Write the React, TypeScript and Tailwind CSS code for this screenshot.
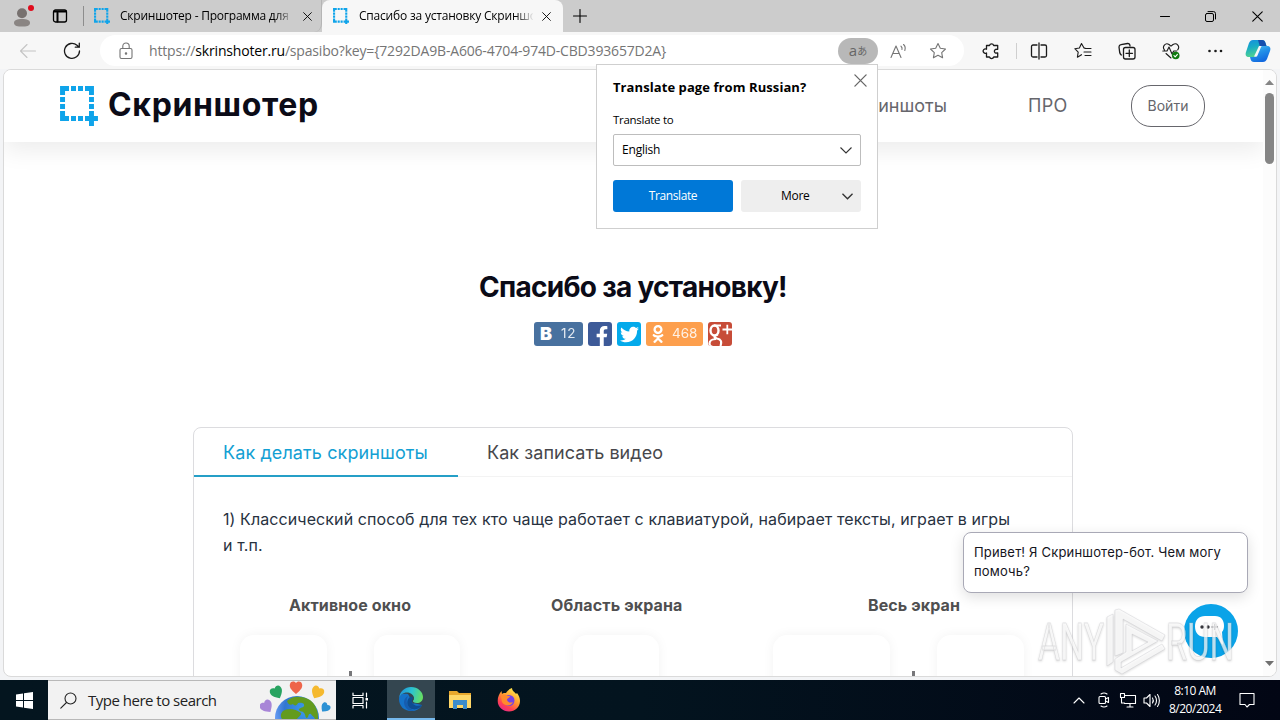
import type { ReactNode } from "react";
import { FaFacebookF, FaOdnoklassniki, FaTwitter } from "react-icons/fa";

interface IconProps {
  children: ReactNode;
  className?: string;
  size?: number;
  box?: number;
  stroke?: number;
}

function Icon({ children, className = "", size = 18, box = 18, stroke = 1.1 }: IconProps) {
  return (
    <svg
      width={size}
      height={size}
      viewBox={`0 0 ${box} ${box}`}
      fill="none"
      stroke="currentColor"
      strokeWidth={stroke}
      strokeLinecap="round"
      strokeLinejoin="round"
      className={`shrink-0 ${className}`}
    >
      {children}
    </svg>
  );
}

function CropLogo({ size }: { size: number }) {
  return (
    <svg width={size} height={size * 1.05} viewBox="0 0 38 40" fill="#0fa4ea" className="shrink-0">
      <path d="M0 0h9v5H5v4H0zM11 0h5v5h-5zM18 0h5v5h-5zM25 0h9v9h-5V5h-4zM0 11h5v5H0zM0 18h5v5H0zM0 25h5v5h4v5H0zM29 11h5v5h-5zM29 18h5v5h-5zM11 30h5v5h-5zM18 30h5v5h-5zM25 30h4v-5h5v5h4v5h-4v5h-5v-5h-4z" />
    </svg>
  );
}

function Close({ size = 9 }: { size?: number }) {
  return (
    <Icon size={size} box={10} stroke={1}>
      <path d="M.7.7l8.6 8.6M9.3.7L.7 9.3" />
    </Icon>
  );
}

function TabStrip() {
  return (
    <div className="flex h-8 shrink-0 items-center bg-[#cccccc] text-xs text-black">
      <svg width="24" height="24" viewBox="0 0 24 24" className="ml-[10px] shrink-0">
        <circle cx="12" cy="9.3" r="5" fill="#77716f" />
        <path d="M4 19c0-3 3-4 8-4s8 1 8 4-4 3.500-8 3.500S4 22 4 19z" fill="#8a8583" />
        <circle cx="21" cy="4" r="3" fill="#e00b1c" />
      </svg>
      <Icon size={16} box={16} className="ml-[18px]" stroke={1.3}>
        <rect x="1.500" y="2" width="13" height="12" rx="2" />
        <path d="M2 3.500h12M5.500 5v8.500" strokeWidth="2" />
      </Icon>
      <div className="ml-[15px] h-5 w-px bg-[#8d8d8d]" />
      <div className="flex h-8 w-[238px] items-center rounded-br-lg border-r border-[#b5b5b5]">
        <div className="ml-[10px] flex w-[26px]">
          <CropLogo size={16} />
        </div>
        <span className="w-[170px] whitespace-nowrap bg-linear-to-r from-black from-90% to-[#aaaaaa] bg-clip-text tracking-[-0.22px] text-transparent">
          Скриншотер - Программа для
        </span>
        <div className="ml-[13px]">
          <Close />
        </div>
      </div>
      <div className="flex h-8 w-[241px] items-center rounded-t-lg bg-[#f7f7f7]">
        <div className="ml-[11px] flex w-[26px]">
          <CropLogo size={16} />
        </div>
        <span className="w-[174px] whitespace-nowrap bg-linear-to-r from-black from-88% to-[#e8e8e8] bg-clip-text tracking-[-0.2px] text-transparent">
          Спасибо за установку Скриншо
        </span>
        <div className="ml-[9px]">
          <Close />
        </div>
      </div>
      <Icon size={14} box={14} className="ml-[10px]">
        <path d="M7 .5v13M.5 7h13" />
      </Icon>
      <div className="ml-auto flex items-center">
        <Icon size={10} box={10} className="mr-[35px]">
          <path d="M.5 5.500h9" />
        </Icon>
        <Icon size={11} box={11} className="mr-9" stroke={1}>
          <rect x=".5" y="2.500" width="8" height="8" rx="1.500" />
          <path d="M3 .6h5.500a2 2 0 012 2V8" />
        </Icon>
        <span className="mr-[17px]">
          <Close size={11} />
        </span>
      </div>
    </div>
  );
}

function Toolbar() {
  return (
    <div className="flex h-[37px] shrink-0 items-center bg-[#f7f7f7] text-[#1b1b1b]">
      <Icon className="ml-[19px] text-[#c4c4c4]">
        <path d="M16.500 9H1.500M8 2.500L1.500 9 8 15.500" />
      </Icon>
      <Icon className="ml-[26px]" stroke={1.3}>
        <path d="M16.500 9A7.500 7.500 0 1114 3.300L16.200 5.200M16.300 1.200v4h-4" />
      </Icon>
      <div className="ml-[19px] flex h-[31px] w-[864px] items-center rounded-full bg-white text-[#757575]">
        <Icon className="ml-[17px]">
          <rect x="3" y="6.500" width="12" height="10" rx="1.500" />
          <path d="M5.800 6.500V4.200a3.200 3.200 0 016.400 0v2.300" />
          <circle cx="9" cy="11.500" r=".7" fill="currentColor" />
        </Icon>
        <span className="ml-[14px] w-[689px] whitespace-nowrap text-sm tracking-[-0.18px]">
          https://<span className="text-black">skrinshoter.ru</span>/spasibo?key=&#123;7292DA9B-A606-4704-974D-CBD393657D2A&#125;
        </span>
        <div className="flex h-[26px] w-10 items-center justify-center rounded-full bg-[#b8b8b8] font-['Open_Sans','Noto_Sans_CJK_JP',sans-serif] text-[#666]">
          <span className="text-[15px] leading-none">a</span>
          <span className="text-[10px] leading-none">あ</span>
        </div>
        <Icon className="ml-[12px]">
          <path d="M1 15.500L6 4l5 11.500M2.700 11.500h6.600M11 4.200c1 .8 1.300 2 1 3.300M13.500 2.500c1.700 1.500 2 3.800 1.300 6" />
        </Icon>
        <Icon className="ml-[21px]">
          <path d="M9 1.500l2.300 4.800 5.200.7-3.800 3.600.9 5.200L9 13.300l-4.600 2.500.9-5.200L1.500 7l5.200-.7z" />
        </Icon>
      </div>
      <Icon className="ml-[18px]" stroke={1.3}>
        <path d="M4.500 3.500h3a2.200 2.200 0 014.200 0h4v3.800h-1a1.900 1.900 0 100 3.700h1v4h-4a2.200 2.200 0 01-4.200 0h-3v-4a2.200 2.200 0 110-3.800z" />
      </Icon>
      <div className="ml-[16px] h-4 w-px bg-[#cfcfcf]" />
      <Icon className="ml-[13px]" stroke={1.3}>
        <path d="M7 3H3a1.500 1.500 0 00-1.500 1.500v9A1.500 1.500 0 003 15h4M11 3h4a1.500 1.500 0 011.500 1.500v9A1.500 1.500 0 0115 15h-4M9 1v16" />
      </Icon>
      <Icon className="ml-[26px]">
        <path d="M10 6L7.500 1.500 5.400 6l-4.600.7 3.400 3.400-.8 5.100 4.100-2.500M11 6.500h6M10 10h7M11 13.500h6M10 6h1" />
      </Icon>
      <Icon className="ml-[26px]" stroke={1.3}>
        <path d="M3.500 13C1.800 12.500 1.700 11 1.500 9L1 5c0-1.500.8-2.200 2-2.400L9.500 1.500c1.500-.1 2.400.7 2.500 2.500" />
        <rect x="5.500" y="5.500" width="11.500" height="11.500" rx="2" />
        <path d="M11.300 8v6.500M8 11.300h6.500" />
      </Icon>
      <Icon className="ml-[26px]">
        <path d="M2.500 8C-.3 4.500 3.500.2 7 2.500l2 1.700 2-1.700c4-2.300 7.300 2 4.700 5.300M.8 9H5l2-4 3 7 1.700-3h3M4 11.500L9 16" />
        <circle cx="13.700" cy="13.500" r="3.800" fill="#0f7b0f" stroke="none" />
        <path d="M12 13.500l1.200 1.300 2.200-2.500" stroke="#fff" />
      </Icon>
      <Icon className="ml-[26px]">
        <g fill="currentColor" stroke="none">
          <circle cx="3.500" cy="9" r="1.300" />
          <circle cx="9.500" cy="9" r="1.300" />
          <circle cx="15" cy="9" r="1.300" />
        </g>
      </Icon>
      <Copilot />
    </div>
  );
}

function Copilot() {
  return (
    <svg width="26" height="24" viewBox="0 0 26 24" className="ml-[21px] shrink-0">
      <defs>
        <linearGradient id="cpA" x1="0" y1="0" x2=".3" y2="1">
          <stop offset="0" stopColor="#168de0" />
          <stop offset=".45" stopColor="#18abc5" />
          <stop offset="1" stopColor="#51d391" />
        </linearGradient>
        <linearGradient id="cpB" x1="0" y1="0" x2=".5" y2="1">
          <stop offset="0" stopColor="#54c8f2" />
          <stop offset=".5" stopColor="#2492e8" />
          <stop offset="1" stopColor="#1269df" />
        </linearGradient>
      </defs>
      <path d="M8 1h9c2 0 3 1 3.500 3l1 3h-5c-2 0-2.500 1-3 3l-2 6c-1 2-2 2-3.500 2H4c-3 0-4-2-3-5L4 4c1-2 2-3 4-3z" fill="url(#cpA)" />
      <path d="M13 1h4c2 0 3 1 3.500 3l1 3h-5l-1.500 1z" fill="#174fae" />
      <path d="M18 7h4c3 0 4 2 3 5l-3 8c-1 2-2 3-4 3H9c-2 0-3-1-3.500-3L5 18h4c2 0 3-1 3.500-3l2-6c.7-1.500 1.500-2 3.500-2z" fill="url(#cpB)" />
      <path d="M14 7h2.500L12 17.500h-3z" fill="#f7f7f7" />
    </svg>
  );
}

function SiteHeader() {
  return (
    <header className="flex h-[72px] shrink-0 items-center bg-white font-['Inter',sans-serif] text-lg text-[#66666c] shadow-[0_8px_24px_rgba(0,0,0,0.08)]">
      <div className="ml-[56px]">
        <CropLogo size={38} />
      </div>
      <span className="-mt-[2px] ml-[10px] w-[690px] text-[32px] font-bold leading-none tracking-[0.65px] text-[#0b0b17]">
        Скриншотер
      </span>
      <span className="-ml-[2px] flex w-[151px] justify-end">Скриншоты</span>
      <span className="ml-[81px] w-[103px] tracking-[0.3px]">ПРО</span>
      <span className="flex h-[42px] w-[74px] items-center justify-center rounded-[20px] border border-[#66666c] text-sm">
        Войти
      </span>
    </header>
  );
}

function ShareRow() {
  return (
    <div className="ml-[530px] mt-[18px] flex h-6 gap-[5px] text-sm text-white">
      <span className="flex w-[49px] items-center rounded-[3px] bg-[#48719f] pl-[6px]">
        <b className="w-[21px] text-lg leading-none font-black">В</b>
        <span className="text-[13.500px] tracking-[0.7px] opacity-85">12</span>
      </span>
      <span className="flex w-6 items-end justify-end overflow-hidden rounded-[3px] bg-[#3d5a98]">
        <FaFacebookF size={20} />
      </span>
      <span className="flex w-6 items-center justify-center rounded-[3px] bg-[#04aaeb]">
        <FaTwitter size={19} />
      </span>
      <span className="flex w-[57px] items-center rounded-[3px] bg-[#fd9f4d] pl-[3px]">
        <FaOdnoklassniki size={18} />
        <span className="ml-[5px] text-[13.500px] opacity-85">468</span>
      </span>
      <svg width="24" height="24" viewBox="0 0 24 24" fill="none" stroke="#fff" strokeWidth="2.400" className="rounded-[3px] bg-[#c74c38]">
        <ellipse cx="6.500" cy="8.500" rx="4" ry="5" />
        <path d="M6 3.500h7M10 12.500c-4 1-5 3-1 4 4 .8 5 3 3.500 7.500M8 17c-4 0-6.500 2-6.500 4.500s2 3.500 4 3.500" strokeWidth="2.200" />
        <path d="M14.500 7.500h9.500M19.300 2.700v9.500" strokeWidth="1.800" />
      </svg>
    </div>
  );
}

function Key({ className }: { className: string }) {
  return <div className={`h-20 shrink-0 rounded-[14px] bg-white shadow-[0_0_12px_rgba(0,0,0,0.05)] ${className}`} />;
}

function GuideCard() {
  return (
    <div className="ml-[189px] mt-[81px] h-[300px] w-[880px] shrink-0 rounded-t-lg border border-[#dcdcdf]">
      <div className="flex h-[49px] border-b border-[#f3f3f3] text-lg leading-[50px]">
        <span className="h-[49px] w-[264px] whitespace-nowrap border-b-2 border-[#259fc7] pl-[29px] tracking-[0.1px] text-[#13a0d3]">
          Как делать скриншоты
        </span>
        <span className="pl-[29px] tracking-[0.06px] text-[#47474b]">Как записать видео</span>
      </div>
      <p className="ml-[29px] mt-[29px] w-[800px] text-base leading-[26px] tracking-[0.09px] text-[#28323f]">
        1) Классический способ для тех кто чаще работает с клавиатурой, набирает тексты, играет в игры
        <br />и т.п.
      </p>
      <div className="mt-[37px] flex text-base font-bold leading-5 whitespace-nowrap text-[#4f4f50]">
        <span className="ml-[95px] w-[262px] tracking-[0.1px]">Активное окно</span>
        <span className="w-[317px] tracking-[0.15px]">Область экрана</span>
        <span className="tracking-[0.1px]">Весь экран</span>
      </div>
      <div className="mt-[20px] flex">
        <Key className="ml-[46px] w-[87px]" />
        <i className="ml-[22px] mt-[36px] h-5 w-[3px] bg-[#77777a]" />
        <Key className="ml-[22px] w-[86px]" />
        <Key className="ml-[113px] w-[86px]" />
        <Key className="ml-[114px] w-[117px]" />
        <i className="ml-[22px] mt-[36px] h-5 w-[3px] bg-[#77777a]" />
        <Key className="ml-[22px] w-[87px]" />
      </div>
    </div>
  );
}

function Scrollbar() {
  return (
    <div className="-ml-px flex w-[13px] shrink-0 flex-col items-center bg-[#fcfcfc] py-[10px]">
      <svg width="9" height="5" viewBox="0 0 9 5" fill="#858585">
        <path d="M4.500 0L9 5H0z" />
      </svg>
      <div className="mt-2 h-[71px] w-[9px] rounded-full bg-[#858585]" />
      <svg width="9" height="5" viewBox="0 0 9 5" fill="#707070" className="mt-auto">
        <path d="M0 0h9L4.500 5z" />
      </svg>
    </div>
  );
}

function Chevron() {
  return (
    <svg width="12" height="7" viewBox="0 0 12 7" fill="none" stroke="#333" strokeWidth="1.100">
      <path d="M.5.5L6 6 11.500.5" />
    </svg>
  );
}

function TranslatePopup() {
  return (
    <div className="absolute left-[596px] top-[64px] z-20 h-[165px] w-[282px] border border-[#cfcfcf] bg-white px-4 pt-[13px] text-xs text-black">
      <div className="flex h-[18px] items-center justify-between">
        <b className="mt-px whitespace-nowrap text-[13px] tracking-[0.08px]">Translate page from Russian?</b>
        <span className="-mr-[6px] -mt-[14px] text-[#666]">
          <Close size={13} />
        </span>
      </div>
      <div className="mt-[14px] h-[18px] text-[11.500px] leading-[20px] tracking-[-0.28px]">Translate to</div>
      <div className="mt-[6px] flex h-8 items-center justify-between rounded-[2px] border border-[#bdbdbd] px-2">
        <span className="tracking-[-0.2px]">English</span>
        <Chevron />
      </div>
      <div className="mt-[14px] flex gap-2">
        <div className="flex h-8 w-[120px] items-center justify-center rounded-[3px] bg-[#0078d7] text-white">
          <span className="tracking-[-0.4px]">Translate</span>
        </div>
        <div className="flex h-8 w-[120px] items-center rounded-[3px] bg-[#eeeeee] pl-10">
          <span className="w-[61px] tracking-[-0.3px]">More</span>
          <svg width="11" height="7" viewBox="0 0 12 7" fill="none" stroke="#333" strokeWidth="1.500">
            <path d="M.5.5L6 6 11.500.5" />
          </svg>
        </div>
      </div>
    </div>
  );
}

function ChatWidget() {
  return (
    <>
      <div className="absolute left-[963px] top-[532px] h-[61px] w-[285px] rounded-lg border border-[#a9a9b6] bg-white pl-[10px] pt-[10px] font-['Inter',sans-serif] text-[13px] leading-[19px] tracking-[0.18px] text-[#15151d] shadow-[0_4px_14px_rgba(0,0,0,0.13)]">
        Привет! Я Скриншотер-бот. Чем могу
        <br />
        помочь?
      </div>
      <svg width="54" height="54" viewBox="0 0 54 54" className="absolute left-[1184px] top-[604px]">
        <circle cx="27" cy="27" r="27" fill="#0aa3e8" />
        <path d="M21 12h10c6 0 9 4 9 10 0 3-1 5-2 6l1 13c-3-2-4-6-6-8H21c-6 0-10-4-10-10.500S15 12 21 12z" fill="#fff" />
        <g fill="#35353b">
          <circle cx="18" cy="23" r="1.700" />
          <circle cx="24" cy="23" r="1.700" />
          <path d="M30 20h1.400v2.300h2.400v1.400h-2.400V26H30v-2.300h-2.400v-1.400H30z" fill="#77777d" />
        </g>
      </svg>
    </>
  );
}

function Watermark() {
  return (
    <svg
      width="204"
      height="75"
      viewBox="0 0 204 75"
      fill="#fff"
      fillOpacity=".72"
      stroke="#b4b4b8"
      strokeOpacity=".35"
      strokeWidth=".8"
      className="absolute left-[1036px] top-[603px] drop-shadow-[0_1px_1px_rgba(0,0,0,0.2)] font-['Roboto',sans-serif] text-[51px]"
    >
      <text x="2" y="57" textLength="66" lengthAdjust="spacingAndGlyphs">
        ANY
      </text>
      <text x="130" y="57" textLength="68" lengthAdjust="spacingAndGlyphs">
        RUN
      </text>
      <path
        fillRule="evenodd"
        d="M79 7l4-1 46 26-3 6-39-22v34l-8 3zM71 14l6-3v48l-6 4zM90 21l32 17-37 21v6l41-24 3 5-43 25-7-4V56l11-7zM96 31v17l16-9z"
      />
    </svg>
  );
}

function Heart({ x, y, angle, fill }: { x: number; y: number; angle: number; fill: string }) {
  return (
    <path
      d="M0 6C-5 2-7-1-6-4s4-3 6-1c2-2 5-2 6 1S5 2 0 6z"
      fill={fill}
      transform={`translate(${x} ${y}) rotate(${angle})`}
    />
  );
}

function SearchArt() {
  return (
    <svg width="76" height="38" viewBox="0 0 76 38" className="ml-auto">
      <defs>
        <radialGradient id="sea" cx=".7" cy=".3" r=".8">
          <stop offset="0" stopColor="#3b9ded" />
          <stop offset=".6" stopColor="#3276d0" />
          <stop offset="1" stopColor="#79a8ff" />
        </radialGradient>
      </defs>
      <circle cx="37" cy="37" r="22" fill="url(#sea)" />
      <path d="M27 20c3-3 8-5 13-4 8 0 14 5 16 11 2 4 2 7 2 11h-3c-1-3-3-3-4-5-3-1-2 3-4 4-2 0-1-3-3-5-2-3-3 0-5-3-1-2 4-2 5-4 1-3-3-4-6-3-1 3-4 3-5 1-3 2-5 0-6-3zM23 30c4-3 12-3 18 2 1 2-3 4-4 6H22c-2-3-1-6 1-8z" fill="#639b1e" />
      <Heart x={36} y={7} angle={0} fill="#ee654a" />
      <Heart x={17} y={12} angle={-28} fill="#28a360" />
      <Heart x={57} y={12} angle={28} fill="#f5b92e" />
      <Heart x={7} y={26} angle={-35} fill="#a885d7" />
      <g transform="translate(65 27) scale(.75)">
        <Heart x={0} y={0} angle={40} fill="#2c91d4" />
      </g>
    </svg>
  );
}

function Taskbar() {
  return (
    <div className="flex h-10 shrink-0 items-center bg-linear-to-r from-[#04151f] via-[#03141f] to-[#020614] text-white">
      <div className="flex w-12 justify-center">
        <svg width="17" height="17" viewBox="0 0 17 17" fill="#fff">
          <path d="M0 2.400l7-1v6.600H0zM8 1.300L17 0v8H8zM0 9h7v6.600l-7-1zM8 9h9v8l-9-1.300z" />
        </svg>
      </div>
      <div className="flex h-10 w-72 items-center border-y border-[#b8b8b8] bg-[#f2f2f2] text-[#222]">
        <Icon size={17} box={17} className="ml-3">
          <circle cx="10.500" cy="6.500" r="5.500" />
          <path d="M6.500 10.500L.8 16.200" />
        </Icon>
        <span className="ml-[11px] whitespace-nowrap text-[15px] tracking-[-0.5px]">Type here to search</span>
        <SearchArt />
      </div>
      <div className="flex w-[51px] justify-center">
        <Icon size={17} box={17} stroke={1.2} className="-ml-[2px]">
          <path d="M1 1v2.500h10V1M1 16v-2.500h10V16M1 5.500h10v6H1zM14.500 1v4M14.500 10v6" />
          <rect x="13.500" y="6" width="2.500" height="2.500" fill="#fff" stroke="none" />
        </Icon>
      </div>
      <div className="flex h-10 w-12 items-center justify-center border-b-2 border-[#76b9ed] bg-[#344650]">
        <EdgeIcon />
      </div>
      <div className="flex w-[50px] justify-center">
        <svg width="22" height="20" viewBox="0 0 22 20">
          <path d="M0 1h8l2 2h12v15H0z" fill="#e9a82d" />
          <path d="M0 5h22v13H0z" fill="#ffd768" />
          <path d="M4 10h14v9h-4v-4H8v4H4z" fill="#3c8ccb" />
        </svg>
      </div>
      <div className="flex w-12 justify-center">
        <FirefoxIcon />
      </div>
      <div className="ml-auto flex items-center">
        <Icon size={12} box={12} className="mr-[11px]">
          <path d="M1 9l5-5 5 5" />
        </Icon>
        <Icon size={16} box={16} className="mr-[7px]">
          <rect x="3" y="4.500" width="6.500" height="7" rx="1" />
          <path d="M9.500 7l3-1.500v5l-3-1.500M5 2c2-1.300 4-1.300 6 0M5 14c2 1.300 4 1.300 6 0" />
        </Icon>
        <Icon size={18} box={18} className="mr-[6px]">
          <path d="M5.500 4.500h11v8h-11M2.500 6.500V12h3M8 16h6M11 13v3" />
          <rect x="1.500" y="2.500" width="4" height="4" />
        </Icon>
        <Icon size={17} box={17} className="mr-[9px]">
          <path d="M1 6h2.500L7 2.500v12L3.500 11H1zM9.500 6c1 1.500 1 3.500 0 5M12 4c2 2.500 2 6.500 0 9M14.500 2.500c2.500 3.500 2.500 8.500 0 12" />
        </Icon>
        <div className="w-[52px] text-center text-xs leading-[18px] whitespace-nowrap tracking-[-0.5px]">
          8:10 AM
          <br />
          8/20/2024
        </div>
        <Icon size={16} box={16} className="ml-[18px] mr-[25px]">
          <path d="M1 1.500h14v11h-4.500L8 15l-2-2.500H1z" />
        </Icon>
      </div>
    </div>
  );
}

function EdgeIcon() {
  return (
    <svg width="24" height="24" viewBox="0 0 24 24">
      <defs>
        <linearGradient id="edgeTop" x1="0" y1=".3" x2="1" y2=".5">
          <stop offset="0" stopColor="#2090d8" />
          <stop offset=".5" stopColor="#2bc3d2" />
          <stop offset="1" stopColor="#67df61" />
        </linearGradient>
      </defs>
      <path d="M0 12C0 7 4 6 9 7l5 9 9 2c-2 4-6 6-11 6C5 24 0 19 0 12z" fill="#1572c8" />
      <path d="M0 11C1 4 6 0 12 0c7 0 12 5 12 10 0 4-3 6-6 6-3 0-4.500-1-4-2.500 1-1 1-2 1-3C14 7 11 5.500 8 5.500 4 5.500 1 8 0 11z" fill="url(#edgeTop)" />
      <path d="M9 9c-3 5-1 12 6 14.500C9 25 5 20 5 15c0-3 2-5 4-6z" fill="#175cae" />
      <path d="M11 10c-4 3-3 9 0 11 4 3 10 1 12-3-5 2-10 0-10-4 0-1.500 1-2 1-3-.5-1-1.500-1.500-3-1z" fill="#0e4c91" />
      <path d="M14 11c1 1-1 2-1 3.500 0 1.500 2 3 4 3.300-1.500-.5-3.500-2-3-4 .8-1 .8-2 0-2.800z" fill="#344650" />
    </svg>
  );
}

function FirefoxIcon() {
  return (
    <svg width="24" height="24" viewBox="0 0 24 24">
      <defs>
        <linearGradient id="fox" x1=".8" y1="0" x2=".2" y2="1">
          <stop offset="0" stopColor="#fff44f" />
          <stop offset=".45" stopColor="#ff9830" />
          <stop offset=".75" stopColor="#ff4053" />
          <stop offset="1" stopColor="#e32791" />
        </linearGradient>
      </defs>
      <path d="M15 0c0 3 3 4 4 6l1-1c2 3 3 5 3 8 0 6-5 10.500-11 10.500S.7 19 .7 13C.7 9 2 6 4.500 3l.5 3c1-1 2-1.300 4-1C10 3 12 1 15 0z" fill="url(#fox)" />
      <circle cx="12" cy="12.500" r="5.500" fill="#7542e5" />
      <path d="M4 8c3-2 5-1 6 0h3c0 2-3 2-3 4 1 3 4 3 6 2-2 5-9 4-11 0z" fill="#ff8b2c" />
    </svg>
  );
}

export default function App() {
  return (
    <div className="relative flex h-[720px] w-[1280px] flex-col overflow-hidden bg-[#f3f4f6] font-['Open_Sans','Noto_Sans',sans-serif]">
      <TabStrip />
      <Toolbar />
      <div className="mx-[3px] mb-[3px] flex min-h-0 flex-1 overflow-hidden rounded-lg border border-[#dadada] bg-white">
        <main className="flex min-w-0 flex-1 flex-col overflow-hidden font-['Inter',sans-serif]">
          <SiteHeader />
          <h1 className="ml-[475px] mt-[128px] whitespace-nowrap text-[28px] font-bold leading-[34px] tracking-[-0.72px] text-[#0b0b17]">
            Спасибо за установку!
          </h1>
          <ShareRow />
          <GuideCard />
        </main>
        <Scrollbar />
      </div>
      <Taskbar />
      <TranslatePopup />
      <ChatWidget />
      <Watermark />
    </div>
  );
}
